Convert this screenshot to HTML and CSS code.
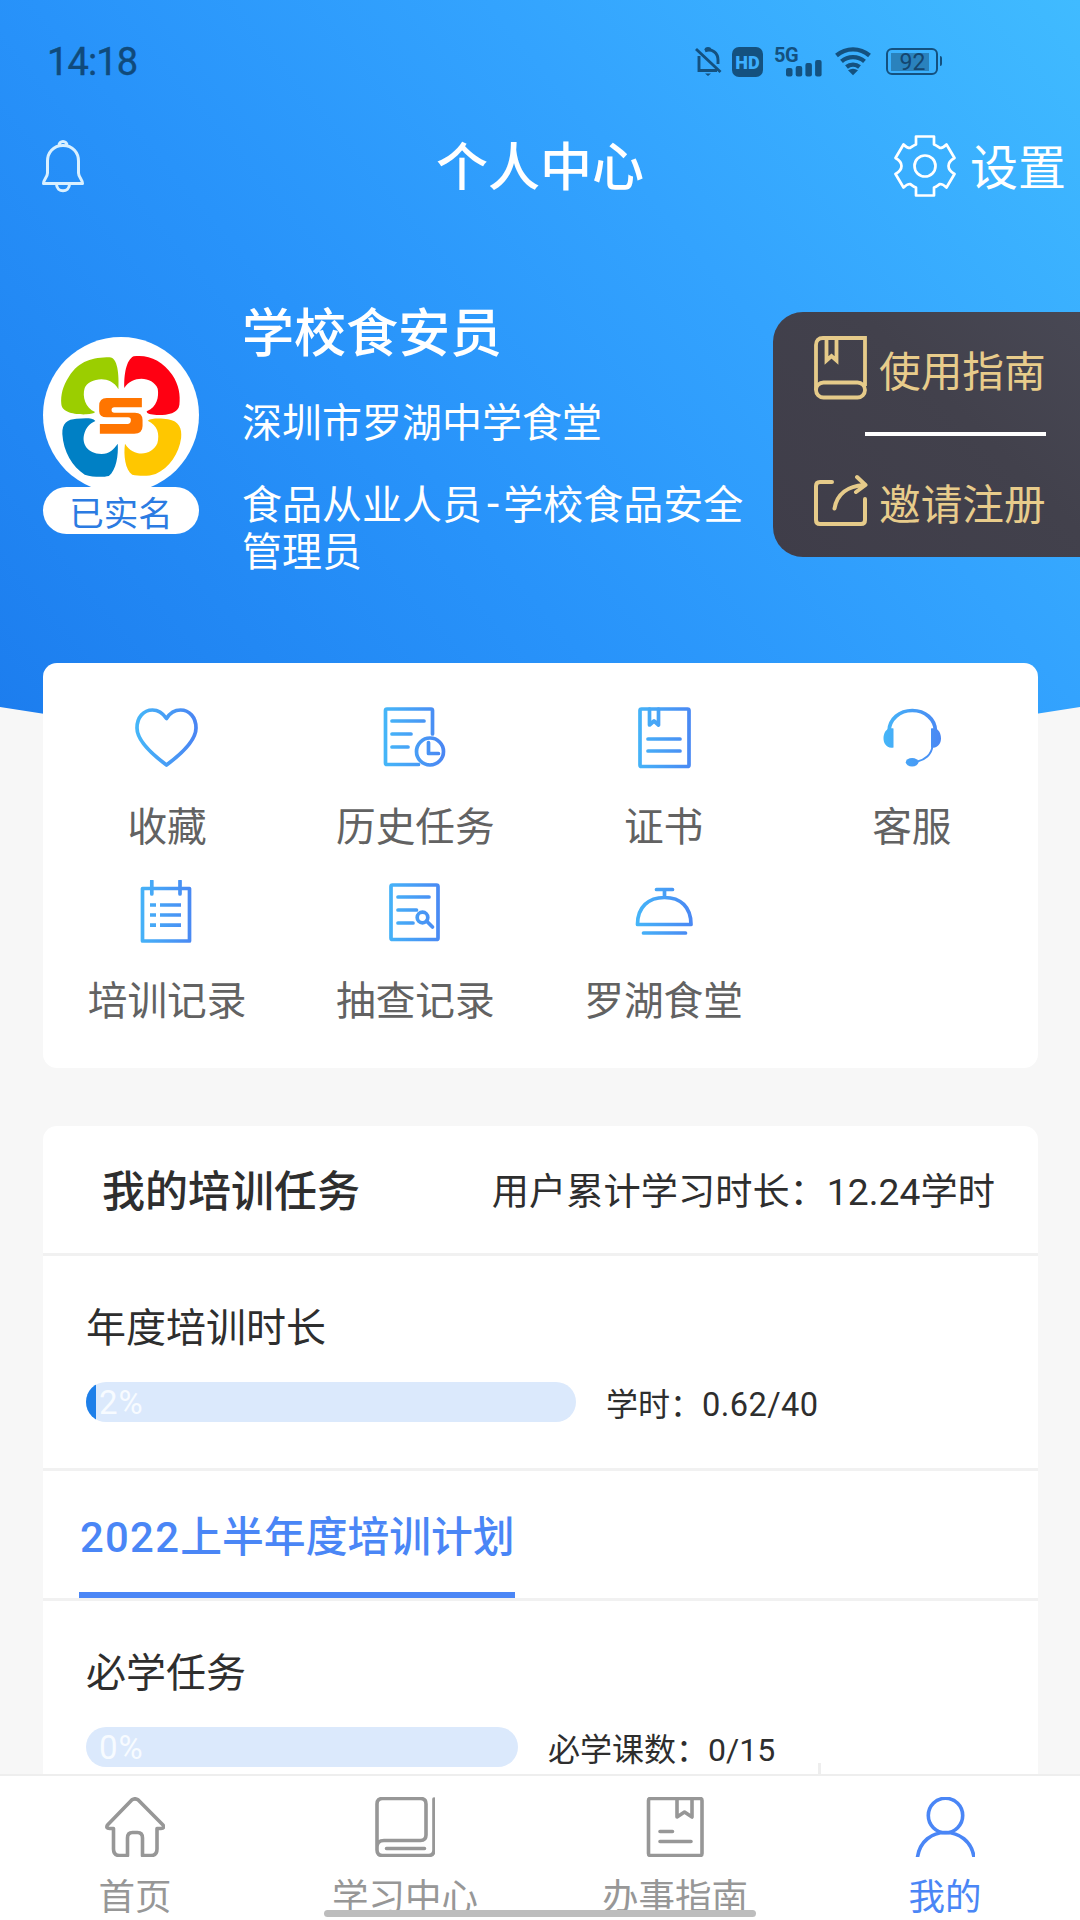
FILE: index.html
```html
<!DOCTYPE html>
<html lang="zh-CN">
<head>
<meta charset="utf-8">
<title>个人中心</title>
<link rel="stylesheet" href="styles.css">
</head>
<body>
<svg class="defs" width="0" height="0" aria-hidden="true">
  <defs>
    <linearGradient id="blue" gradientUnits="userSpaceOnUse" x1="2" y1="0" x2="60" y2="0">
      <stop offset="0" stop-color="#45b5f8"/><stop offset="1" stop-color="#4a86f3"/>
    </linearGradient>
  </defs>
</svg>
<main class="screen">
  <header class="hero">
    <div class="status">
      <span class="clock">14:18</span>
      <div class="status-icons">
        <svg class="i-mute" width="27" height="31" viewBox="0 0 27 31" fill="none" stroke="#14517f" stroke-width="2.900">
          <path d="M4 10v14.500h18M10 4.800C17 2 23 7 23 14v4M1 3l24.500 23"/><path d="M9.500 4a3.500 3 0 0 1 7 0zM10 27.500h6l-3 2.500z" fill="#14517f" stroke="none"/>
        </svg>
        <span class="hd">HD</span>
        <div class="signal">
          <span class="net">5G</span>
          <svg width="37" height="17" viewBox="0 0 37 17" fill="#14517f"><rect x="0" y="8" width="6.500" height="8.500" rx="2"/><rect x="9.700" y="6" width="6.500" height="10.500" rx="2"/><rect x="19.400" y="3" width="6.500" height="13.500" rx="2"/><rect x="29.100" y="0" width="6.500" height="16.500" rx="2"/></svg>
        </div>
        <svg class="i-wifi" width="36" height="29" viewBox="0 0 36 29" fill="none" stroke="#14517f" stroke-width="4.300">
          <path d="M1.500 8.500C11 .3 25 .3 34.500 8.500M6.500 14.300c6.500-5.600 16.500-5.600 23 0M11.500 20c3.600-3.100 9.400-3.100 13 0"/><path d="M13 23.300q5-3.300 10 0l-5 5z" fill="#14517f" stroke="none"/>
        </svg>
        <div class="battery"><span class="level">92</span></div>
      </div>
    </div>

    <div class="navbar">
      <svg class="i-bell" width="42" height="54" viewBox="0 0 42 54" fill="none" stroke="#d9f0ff" stroke-width="3" stroke-linejoin="round">
        <path d="M17 6.500a4 4 0 1 1 8 0M21 6.500C11 6.500 5.500 14 5.500 22v12c0 4-4 6.500-4 10.500h39c0-4-4-6.500-4-10.500V22c0-8-5.500-15.500-15.500-15.500zM14.500 45c0 9 13 9 13 0"/>
      </svg>
      <h1 class="title">个人中心</h1>
      <div class="settings">
        <svg width="62" height="62" viewBox="0 0 62 62" fill="none" stroke="#fff" stroke-width="2.700" stroke-linejoin="round">
          <path d="M22 1.500h18v8c3 1 4 2.500 6 3.500q3 0 6.500-3.500l8 13.500c-8 4.500-8 11.500 0 16l-8 13.500Q49 49 46 49c-2 1-3 2.500-6 3.500v8H22v-8c-3-1-4-2.500-6-3.500q-3 0-6.500 3.500L1.500 39c8-4.500 8-11.500 0-16l8-13.500Q13 13 16 13c2-1 3-2.500 6-3.500z"/><circle cx="31" cy="31" r="10.500"/>
        </svg>
        <span>设置</span>
      </div>
    </div>

    <section class="profile">
      <div class="avatar-box">
        <div class="avatar">
          <svg width="156" height="156" viewBox="0 0 156 156">
            <g transform="translate(-43 -57) scale(.34435 .33333)">
              <path fill="#9bce00" d="M344 328C346 285 342 232 318 232C270 232 230 242 200 290C182 318 176 345 178 372C180 400 225 404 250 403Q272 402 276 396C248 384 238 350 246 324C256 298 318 280 344 328z"/>
              <path fill="#ff0012" d="M361 324C360 285 366 240 388 229C430 222 472 242 500 284C520 315 524 345 521 374C518 402 480 406 455 405C438 404 426 402 426 394C456 382 462 350 458 326C444 290 386 284 361 324z"/>
              <path fill="#0080c5" d="M277 423C268 412 245 415 222 416C196 418 180 428 181 462C184 515 210 560 246 584C270 592 300 592 316 588C338 570 344 525 342 491C330 508 318 522 295 522C252 520 238 490 244 464C250 440 262 430 277 423z"/>
              <path fill="#ffc700" d="M429 422C440 414 468 415 488 418C520 423 529 446 526 474C520 520 492 564 452 582C430 590 402 588 384 584C364 570 358 525 363 491C390 535 442 526 457 490C464 462 458 436 429 422z"/>
              <path fill="#ff7500" d="M412 354H310Q288 354 288 378V394Q288 412 310 412H372Q380 412 380 420Q380 432 370 432H290V461H390Q414 461 414 438V420Q414 398 392 398H332Q324 398 324 390Q324 382 332 382H412z"/>
            </g>
          </svg>
        </div>
        <span class="verified">已实名</span>
      </div>
      <div class="who">
        <h2 class="name">学校食安员</h2>
        <p class="org">深圳市罗湖中学食堂</p>
        <p class="role">食品从业人员<span class="dash">-</span>学校食品安全管理员</p>
      </div>
      <aside class="quick">
        <a class="quick-item">
          <svg width="54" height="64" viewBox="0 0 54 64" fill="none" stroke="#e6cb8a" stroke-width="3.800">
            <path d="M51 50V2H9Q2 2 2 9v45M12.500 2v22.500l5-4.500 5 4.500V2"/><rect x="2" y="46.500" width="49" height="15" rx="7.500"/>
          </svg>
          <span>使用指南</span>
        </a>
        <hr class="quick-line">
        <a class="quick-item">
          <svg width="54" height="54" viewBox="0 0 54 54" fill="none" stroke="#e6cb8a" stroke-width="4" stroke-linecap="round" stroke-linejoin="round">
            <path d="M18 8H6Q2 8 2 12v34q0 4 4 4h41q4 0 4-4V25M20.500 34.500C23 20 34 12 50 11M43 3l8.500 8L42 18"/>
          </svg>
          <span>邀请注册</span>
        </a>
      </aside>
    </section>
  </header>

  <section class="menu">
    <a class="menu-item">
      <svg width="64" height="64" viewBox="0 0 64 64"><path d="M31.500 13.500C27 7 22 5 17.500 5C8.500 5 2 12.500 2 23c0 11 12 24 29.500 37C49 47 61 34 61 23C61 12.500 54.500 5 45.500 5c-5 0-10 2-14 8.500z"/></svg>
      <span>收藏</span>
    </a>
    <a class="menu-item">
      <svg width="64" height="64" viewBox="-1 0 64 64"><path d="M34.500 59.500H3q-1.500 0-1.500-1.500V5.500Q1.500 4 3 4h44q1.500 0 1.500 1.500V29M8 16h32M8 29h19M8 42h16M44.500 37.500V48.500h10"/><circle cx="46" cy="46.500" r="13.500"/></svg>
      <span>历史任务</span>
    </a>
    <a class="menu-item">
      <svg width="64" height="64" viewBox="-2 0 64 64"><rect x="6" y="4" width="49" height="57.500" rx="1.500"/><path d="M15.500 4v16l4.500-4 4.500 4V4M14 34h32M14 46h32"/></svg>
      <span>证书</span>
    </a>
    <a class="menu-item">
      <svg width="64" height="64" viewBox="-2.500 0 64 64"><path d="M6.500 26C7 14 17 5.500 29.800 5.500S52.500 14 53 26"/><path class="thin" d="M50 41c-1 9-8 14-15 15.500"/><path class="solid" d="M11 23.500C3 22 1 29 1 33.500S4 44 11 42.500zM48.500 23.500c8-1.500 10 5.500 10 10S55.500 44 48.500 42.500z"/><ellipse class="solid" cx="29.600" cy="57.300" rx="6.300" ry="4.200"/></svg>
      <span>客服</span>
    </a>
    <a class="menu-item">
      <svg width="64" height="64" viewBox="0 0 64 64"><path d="M7.500 8.500h47v52.500h-47zM16.800 1v13M45 1v13"/><path class="dots" d="M15 25H21M25 25h21M15 35H21M25 35h21M15 45.200H21M25 45.200h21"/></svg>
      <span>培训记录</span>
    </a>
    <a class="menu-item">
      <svg width="64" height="64" viewBox="-1 0 64 64"><rect x="7" y="5" width="47" height="54.500" rx="1.500"/><path d="M14 17h31M14 30h18.500M14 43h15M42.500 41l6 6"/><circle cx="38.500" cy="37.500" r="5.300"/></svg>
      <span>抽查记录</span>
    </a>
    <a class="menu-item">
      <svg width="64" height="64" viewBox="-2 0 64 64"><path d="M22.500 9.500h16M30.500 9.500V17M3.500 44.500C3.500 27 14.500 17.500 30.500 17.500S57 27 57 44.500zM9.500 53h42"/></svg>
      <span>罗湖食堂</span>
    </a>
  </section>

  <section class="tasks">
    <div class="tasks-head">
      <h3>我的培训任务</h3>
      <span class="total">用户累计学习时长：12.24学时</span>
    </div>
    <div class="block">
      <h4>年度培训时长</h4>
      <div class="progress">
        <div class="bar bar-long"><i style="width:2%"></i><b>2%</b></div>
        <span>学时：<span class="hours">0.62/40</span></span>
      </div>
    </div>
    <div class="tabs"><span class="tab"><span class="year">2022</span>上半年度培训计划</span></div>
    <div class="block last">
      <h4>必学任务</h4>
      <div class="progress">
        <div class="bar bar-short"><i style="width:0%"></i><b>0%</b></div>
        <span>必学课数：0/15</span>
      </div>
      <div class="split"></div>
    </div>
  </section>
</main>

<nav class="tabbar">
  <a><svg width="60" height="60" viewBox="0 0 60 60"><path d="M27 2.800q3-2 6 0L58 28q2 3.500-2 3.500h-4V52q0 6.500-6 6.500h-8.500V41q0-5.500-5-5.500h-5q-5 0-5 5.500v17.500H14.500q-6 0-6-6.500V31.500h-4Q.500 31.500 2.500 28z"/></svg><span>首页</span></a>
  <a><svg width="60" height="60" viewBox="0 0 60 60"><path d="M59 2v51q0 5.500-5.500 5.500H7.500Q2 58.500 2 53V7Q2 1.500 7.500 1.500h38Q51 1.500 51 7v31q0 5.500-5.500 5.500H9Q2 43.500 2 50M11.500 51.500h38"/></svg><span>学习中心</span></a>
  <a><svg width="60" height="60" viewBox="0 0 60 60"><rect x="3.500" y="1.500" width="53.500" height="57" rx="2"/><path d="M32 1.500v18.500l7.500-5 7.500 5V1.500M15 34.500h12.500M15 44.500h31"/></svg><span>办事指南</span></a>
  <a class="active"><svg width="60" height="60" viewBox="0 0 60 60"><circle cx="30.500" cy="18.500" r="17.200"/><path d="M2.500 60C5 44 17 35.500 30.500 35.500S56.500 44 59 60"/></svg><span>我的</span></a>
  <div class="home-bar"></div>
</nav>
</body>
</html>
```

FILE: styles.css
```css
* { box-sizing: border-box; margin: 0; padding: 0; }

body {
  width: 1080px;
  height: 1920px;
  display: flex;
  flex-direction: column;
  overflow: hidden;
  background: #f7f7f7;
  font-family: Roboto, "Noto Sans CJK SC", sans-serif;
  color: #2e2e2e;
}

h1, h2, h3, h4 { font-weight: 500; }
svg { display: block; flex: none; }
.defs { position: absolute; }

.screen { flex: 1; min-height: 0; overflow: hidden; }

/* Header */
.hero {
  height: 790px;
  margin-bottom: -127px;
  color: #fff;
  background: linear-gradient(50deg, #1b7bed 0%, #2893fa 40%, #33a3fe 66%, #40bbff 100%);
  clip-path: polygon(0 0, 100% 0, 100% 707px, 50% 791px, 0 707px);
}

.status {
  height: 122px;
  padding-left: 47px;
  padding-right: 139px;
  display: flex;
  align-items: center;
  justify-content: space-between;
}
.clock { padding-top: 2px; font-size: 38px; line-height: 40px; letter-spacing: -0.9px; color: #104a7b; -webkit-text-stroke: .4px #104a7b; }
.status-icons { display: flex; align-items: center; padding-top: 1px; color: #14517f; }
.i-mute { margin-right: 10px; }
.hd {
  width: 31px; height: 30px; border-radius: 7px;
  margin-right: 11px;
  background: #14517f; color: #3dafff;
  font-size: 18px; font-weight: 900; line-height: 31px; text-align: center;
}
.signal { width: 49px; height: 30px; margin-right: 12px; display: flex; align-items: flex-end; }
.signal svg { margin-left: -12px; }
.net { width: 24px; align-self: flex-start; font-size: 20px; font-weight: 700; line-height: 16px; letter-spacing: -.5px; }
.i-wifi { margin-right: 15px; }
.battery {
  width: 52px; height: 27px; padding: 2.500px 3px; margin-right: 3px;
  border: 2.500px solid #14517f; border-radius: 6px;
  position: relative;
}
.battery::after { content: ""; position: absolute; right: -6px; top: 6px; width: 2.500px; height: 10px; background: #14517f; border-radius: 0 2px 2px 0; }
.level { display: block; width: 38px; height: 18px; padding-left: 5px; background: #2a82bd; font-size: 23px; line-height: 19px; text-align: center; color: #14466f; }

.navbar { height: 90px; display: grid; grid-template-columns: 1fr auto 1fr; align-items: center; padding: 0 14px; }
.i-bell { margin: 0 0 3px 28px; }
.title { padding-top: 4px; font-size: 52px; line-height: 60px; }
.settings { justify-self: end; display: flex; align-items: center; gap: 14px; font-size: 48px; line-height: 56px; }
.settings svg { margin-bottom: 3px; }
.settings span { padding-top: 3px; }

.profile { display: flex; align-items: flex-start; padding-left: 43px; padding-top: 86px; }
.avatar-box { width: 156px; margin-top: 39px; flex: none; }
.avatar { width: 156px; height: 150px; }
.avatar svg { background: #fff; border-radius: 50%; }
.verified {
  display: block; position: relative; height: 47px; border-radius: 24px;
  background: #fff; color: #2b7be2; font-size: 34.500px; line-height: 54px; text-align: center;
}
.who { flex: 1; min-width: 0; padding: 1px 0 0 43px; }
.name { font-size: 52px; line-height: 72px; }
.org { margin-top: 29px; font-size: 40px; line-height: 48px; }
.role { margin-top: 34px; font-size: 40px; line-height: 47px; word-break: break-all; }
.dash { padding: 0 4px 0 5px; font-size: 44px; line-height: 40px; }

.quick {
  flex: none; width: 307px; height: 245px; margin-top: 14px;
  padding: 23px 0 0 41px;
  border-radius: 30px 0 0 30px;
  background: linear-gradient(45deg, #3f3d49, #42414c 60%, #484854);
  color: #e8cc8b; font-size: 41.700px;
}
.quick-item { display: flex; align-items: center; gap: 11px; height: 66px; }
.quick-item span { padding-top: 2px; }
.quick-line { width: 181px; height: 4px; margin: 31px 0 32px 51px; border: 0; background: #fff; }

/* Shortcut grid */
.menu {
  position: relative;
  width: 995px; height: 405px; margin: 0 auto 0 43px;
  padding: 42px 2px 0 0;
  display: grid; grid-template-columns: repeat(4, 1fr); grid-auto-rows: 174.500px;
  background: #fff; border-radius: 14px;
}
.menu-item { display: flex; flex-direction: column; align-items: center; gap: 31.500px; font-size: 39.700px; line-height: 54px; color: #626262; }
.menu-item svg { fill: none; stroke: url(#blue); stroke-width: 3.700; stroke-linecap: round; stroke-linejoin: round; }
.menu-item .thin { stroke-width: 2; }
.menu-item .dots { stroke-linecap: butt; }
.menu-item .solid { fill: url(#blue); stroke: none; }

/* Training tasks */
.tasks { width: 995px; margin: 58px 0 0 43px; background: #fff; border-radius: 14px; }
.tasks-head { height: 130px; padding: 4px 43px 0 59px; display: flex; align-items: center; justify-content: space-between; border-bottom: 3px solid #f1f1f1; }
.tasks-head h3 { padding-top: 1px; font-size: 43px; line-height: 60px; }
.total { font-size: 37.200px; line-height: 60px; letter-spacing: .05px; }
.block { height: 215px; padding: 45px 43px 0; border-bottom: 3px solid #f1f1f1; }
.block h4 { font-size: 40px; font-weight: 400; line-height: 56px; }
.progress { display: flex; align-items: center; gap: 30px; margin-top: 25px; height: 40px; font-size: 32px; }
.progress > span { padding-top: 6px; line-height: 38px; }
.hours { font-size: 32.600px; letter-spacing: .4px; }
.bar { position: relative; height: 40px; border-radius: 20px; overflow: hidden; background: #dbe9fc; }
.bar i { display: block; height: 100%; background: #1d7fe9; }
.bar b { position: absolute; left: 13px; top: 2px; font-size: 33px; font-weight: 400; line-height: 38px; letter-spacing: 1px; color: #f7fbff; }
.bar-long { width: 490px; }
.bar-short { width: 432px; }
.tabs { height: 130px; padding-left: 36px; display: flex; border-bottom: 3px solid #f1f1f1; }
.tab { width: 436px; height: 127px; padding-left: 1px; border-bottom: 6px solid #4a86f6; color: #4a86f6; font-size: 41.800px; font-weight: 500; line-height: 134px; white-space: nowrap; }
.year { letter-spacing: 1.300px; }
.last { border: 0; }
.split { width: 3px; height: 20px; margin: -4px 0 0 732px; background: #eee; }

/* Bottom navigation */
.tabbar { position: relative; height: 146px; padding-top: 21px; display: grid; grid-template-columns: repeat(4, 1fr); background: #fff; border-top: 2px solid #eee; color: #979797; }
.tabbar a { display: flex; flex-direction: column; align-items: center; gap: 16px; font-size: 36.500px; line-height: 50px; }
.tabbar svg { fill: none; stroke: currentColor; stroke-width: 3.600; stroke-linecap: round; stroke-linejoin: round; }
.tabbar .active { color: #4a86f6; }
.home-bar { position: absolute; left: 324px; top: 134px; width: 432px; height: 7px; border-radius: 4px; background: #bdbdbd; }
```
